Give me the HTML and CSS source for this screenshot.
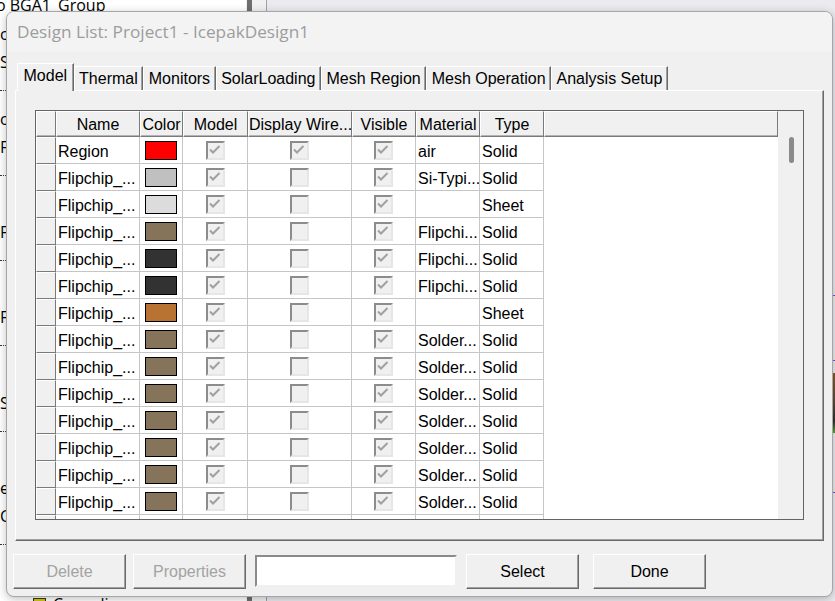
FILE: index.html
```html
<!DOCTYPE html>
<html>
<head>
<meta charset="utf-8">
<title>Design List</title>
<link rel="stylesheet" href="styles.css">
</head>
<body>
<div class="desktop">
  <div class="tree">
    <div class="tree-row first">o BGA1_Group</div>
    <div class="tree-row">c</div>
    <div class="tree-row">S</div>
    <div class="tree-row"><span class="dots"></span></div>
    <div class="tree-row">c</div>
    <div class="tree-row">F</div>
    <div class="tree-row"><span class="dots"></span></div>
    <div class="tree-row"></div>
    <div class="tree-row">F</div>
    <div class="tree-row"><span class="dots"></span></div>
    <div class="tree-row"></div>
    <div class="tree-row">F</div>
    <div class="tree-row"><span class="dots"></span></div>
    <div class="tree-row"></div>
    <div class="tree-row">S</div>
    <div class="tree-row"><span class="dots"></span></div>
    <div class="tree-row"></div>
    <div class="tree-row">e</div>
    <div class="tree-row">C</div>
    <div class="tree-row"><span class="dots"></span></div>
    <div class="tree-row"></div>
    <div class="tree-row leaf"><span class="leaf-line"></span><span class="leaf-icon"></span>Cover lines</div>
  </div>
  <div class="vscroll"><div class="vthumb"></div></div>
  <div class="view">
    <div class="view-line l1"></div>
    <div class="view-line l2"></div>
    <div class="view-obj"></div>
    <div class="view-line l3"></div>
  </div>
</div>

<div class="dialog">
  <div class="titlebar">Design List: Project1 - IcepakDesign1</div>
  <div class="body">
    <div class="tabs">
      <div class="tab active">Model</div>
      <div class="tab">Thermal</div>
      <div class="tab">Monitors</div>
      <div class="tab">SolarLoading</div>
      <div class="tab">Mesh Region</div>
      <div class="tab">Mesh Operation</div>
      <div class="tab">Analysis Setup</div>
    </div>
    <div class="panel">
      <div class="grid">
        <div class="table">
          <div class="h"></div><div class="h">Name</div><div class="h">Color</div><div class="h">Model</div><div class="h">Display Wire...</div><div class="h">Visible</div><div class="h">Material</div><div class="h">Type</div><div class="h"></div>

          <div class="c rh"></div><div class="c t">Region</div><div class="c m"><span class="sw red"></span></div><div class="c m"><span class="cb"><svg viewBox="0 0 15 15"><path d="M2 6.5 5 9.5 11.5 3"/></svg></span></div><div class="c m"><span class="cb"><svg viewBox="0 0 15 15"><path d="M2 6.5 5 9.5 11.5 3"/></svg></span></div><div class="c m"><span class="cb"><svg viewBox="0 0 15 15"><path d="M2 6.5 5 9.5 11.5 3"/></svg></span></div><div class="c t">air</div><div class="c t">Solid</div><div class="e"></div>

          <div class="c rh"></div><div class="c t">Flipchip_...</div><div class="c m"><span class="sw silver"></span></div><div class="c m"><span class="cb"><svg viewBox="0 0 15 15"><path d="M2 6.5 5 9.5 11.5 3"/></svg></span></div><div class="c m"><span class="cb"></span></div><div class="c m"><span class="cb"><svg viewBox="0 0 15 15"><path d="M2 6.5 5 9.5 11.5 3"/></svg></span></div><div class="c t">Si-Typi...</div><div class="c t">Solid</div><div class="e"></div>

          <div class="c rh"></div><div class="c t">Flipchip_...</div><div class="c m"><span class="sw light"></span></div><div class="c m"><span class="cb"><svg viewBox="0 0 15 15"><path d="M2 6.5 5 9.5 11.5 3"/></svg></span></div><div class="c m"><span class="cb"></span></div><div class="c m"><span class="cb"><svg viewBox="0 0 15 15"><path d="M2 6.5 5 9.5 11.5 3"/></svg></span></div><div class="c t"></div><div class="c t">Sheet</div><div class="e"></div>

          <div class="c rh"></div><div class="c t">Flipchip_...</div><div class="c m"><span class="sw brown"></span></div><div class="c m"><span class="cb"><svg viewBox="0 0 15 15"><path d="M2 6.5 5 9.5 11.5 3"/></svg></span></div><div class="c m"><span class="cb"></span></div><div class="c m"><span class="cb"><svg viewBox="0 0 15 15"><path d="M2 6.5 5 9.5 11.5 3"/></svg></span></div><div class="c t">Flipchi...</div><div class="c t">Solid</div><div class="e"></div>

          <div class="c rh"></div><div class="c t">Flipchip_...</div><div class="c m"><span class="sw dark"></span></div><div class="c m"><span class="cb"><svg viewBox="0 0 15 15"><path d="M2 6.5 5 9.5 11.5 3"/></svg></span></div><div class="c m"><span class="cb"></span></div><div class="c m"><span class="cb"><svg viewBox="0 0 15 15"><path d="M2 6.5 5 9.5 11.5 3"/></svg></span></div><div class="c t">Flipchi...</div><div class="c t">Solid</div><div class="e"></div>

          <div class="c rh"></div><div class="c t">Flipchip_...</div><div class="c m"><span class="sw dark"></span></div><div class="c m"><span class="cb"><svg viewBox="0 0 15 15"><path d="M2 6.5 5 9.5 11.5 3"/></svg></span></div><div class="c m"><span class="cb"></span></div><div class="c m"><span class="cb"><svg viewBox="0 0 15 15"><path d="M2 6.5 5 9.5 11.5 3"/></svg></span></div><div class="c t">Flipchi...</div><div class="c t">Solid</div><div class="e"></div>

          <div class="c rh"></div><div class="c t">Flipchip_...</div><div class="c m"><span class="sw copper"></span></div><div class="c m"><span class="cb"><svg viewBox="0 0 15 15"><path d="M2 6.5 5 9.5 11.5 3"/></svg></span></div><div class="c m"><span class="cb"></span></div><div class="c m"><span class="cb"><svg viewBox="0 0 15 15"><path d="M2 6.5 5 9.5 11.5 3"/></svg></span></div><div class="c t"></div><div class="c t">Sheet</div><div class="e"></div>

          <div class="c rh"></div><div class="c t">Flipchip_...</div><div class="c m"><span class="sw brown"></span></div><div class="c m"><span class="cb"><svg viewBox="0 0 15 15"><path d="M2 6.5 5 9.5 11.5 3"/></svg></span></div><div class="c m"><span class="cb"></span></div><div class="c m"><span class="cb"><svg viewBox="0 0 15 15"><path d="M2 6.5 5 9.5 11.5 3"/></svg></span></div><div class="c t">Solder...</div><div class="c t">Solid</div><div class="e"></div>

          <div class="c rh"></div><div class="c t">Flipchip_...</div><div class="c m"><span class="sw brown"></span></div><div class="c m"><span class="cb"><svg viewBox="0 0 15 15"><path d="M2 6.5 5 9.5 11.5 3"/></svg></span></div><div class="c m"><span class="cb"></span></div><div class="c m"><span class="cb"><svg viewBox="0 0 15 15"><path d="M2 6.5 5 9.5 11.5 3"/></svg></span></div><div class="c t">Solder...</div><div class="c t">Solid</div><div class="e"></div>

          <div class="c rh"></div><div class="c t">Flipchip_...</div><div class="c m"><span class="sw brown"></span></div><div class="c m"><span class="cb"><svg viewBox="0 0 15 15"><path d="M2 6.5 5 9.5 11.5 3"/></svg></span></div><div class="c m"><span class="cb"></span></div><div class="c m"><span class="cb"><svg viewBox="0 0 15 15"><path d="M2 6.5 5 9.5 11.5 3"/></svg></span></div><div class="c t">Solder...</div><div class="c t">Solid</div><div class="e"></div>

          <div class="c rh"></div><div class="c t">Flipchip_...</div><div class="c m"><span class="sw brown"></span></div><div class="c m"><span class="cb"><svg viewBox="0 0 15 15"><path d="M2 6.5 5 9.5 11.5 3"/></svg></span></div><div class="c m"><span class="cb"></span></div><div class="c m"><span class="cb"><svg viewBox="0 0 15 15"><path d="M2 6.5 5 9.5 11.5 3"/></svg></span></div><div class="c t">Solder...</div><div class="c t">Solid</div><div class="e"></div>

          <div class="c rh"></div><div class="c t">Flipchip_...</div><div class="c m"><span class="sw brown"></span></div><div class="c m"><span class="cb"><svg viewBox="0 0 15 15"><path d="M2 6.5 5 9.5 11.5 3"/></svg></span></div><div class="c m"><span class="cb"></span></div><div class="c m"><span class="cb"><svg viewBox="0 0 15 15"><path d="M2 6.5 5 9.5 11.5 3"/></svg></span></div><div class="c t">Solder...</div><div class="c t">Solid</div><div class="e"></div>

          <div class="c rh"></div><div class="c t">Flipchip_...</div><div class="c m"><span class="sw brown"></span></div><div class="c m"><span class="cb"><svg viewBox="0 0 15 15"><path d="M2 6.5 5 9.5 11.5 3"/></svg></span></div><div class="c m"><span class="cb"></span></div><div class="c m"><span class="cb"><svg viewBox="0 0 15 15"><path d="M2 6.5 5 9.5 11.5 3"/></svg></span></div><div class="c t">Solder...</div><div class="c t">Solid</div><div class="e"></div>

          <div class="c rh"></div><div class="c t">Flipchip_...</div><div class="c m"><span class="sw brown"></span></div><div class="c m"><span class="cb"><svg viewBox="0 0 15 15"><path d="M2 6.5 5 9.5 11.5 3"/></svg></span></div><div class="c m"><span class="cb"></span></div><div class="c m"><span class="cb"><svg viewBox="0 0 15 15"><path d="M2 6.5 5 9.5 11.5 3"/></svg></span></div><div class="c t">Solder...</div><div class="c t">Solid</div><div class="e"></div>

          <div class="c rh"></div><div class="c t">Flipchip_...</div><div class="c m"><span class="sw brown"></span></div><div class="c m"><span class="cb"><svg viewBox="0 0 15 15"><path d="M2 6.5 5 9.5 11.5 3"/></svg></span></div><div class="c m"><span class="cb"></span></div><div class="c m"><span class="cb"><svg viewBox="0 0 15 15"><path d="M2 6.5 5 9.5 11.5 3"/></svg></span></div><div class="c t">Solder...</div><div class="c t">Solid</div><div class="e"></div>
        </div>
        <div class="scroll"><div class="thumb"></div></div>
      </div>
    </div>
    <div class="footer">
      <button class="btn" disabled>Delete</button>
      <button class="btn" disabled>Properties</button>
      <input class="field" type="text" value="">
      <button class="btn">Select</button>
      <button class="btn done">Done</button>
    </div>
  </div>
</div>
</body>
</html>
```

FILE: styles.css
```css
html, body {
  margin: 0;
  padding: 0;
}
body {
  width: 835px;
  height: 601px;
  overflow: hidden;
  position: relative;
  background: #ececf0;
  font-family: "Liberation Sans", Arial, sans-serif;
}

/* background application */
.desktop {
  display: flex;
  height: 601px;
}
.tree {
  width: 246px;
  background: #ffffff;
  font-family: "Open Sans", "Noto Sans", sans-serif;
  font-size: 16px;
  color: #000;
  overflow: hidden;
}
.tree-row {
  height: 28.4px;
  line-height: 28px;
  white-space: nowrap;
  display: flex;
  align-items: center;
}
.tree-row.first {
  margin-top: -9px;
  margin-left: -4px;
}
.dots {
  width: 4px;
  height: 0;
  border-top: 1px dotted #333;
  margin-right: 1px;
  box-shadow: 5px 0 0 #8b3a2a;
}
.leaf {
  padding-left: 12px;
  margin-top: 3px;
}
.leaf-line {
  width: 18px;
  border-top: 1px dotted #333;
  margin-right: 3px;
}
.leaf-icon {
  width: 11px;
  height: 11px;
  background: #d8c800;
  border: 1px solid #333;
  margin-right: 7px;
}
.vscroll {
  width: 20px;
  background: #f0f0f0;
  border-right: 1px solid #a0a0a0;
  display: flex;
}
.vthumb {
  width: 5px;
  margin-left: 1px;
  background: #6e6e6e;
}
.view {
  flex: 1;
  background: #ebebef;
  position: relative;
}
.view-line {
  position: absolute;
  right: 0;
  width: 3px;
  height: 1px;
  background: #7b55c8;
}
.view-line.l1 { top: 295px; }
.view-line.l2 { top: 360px; }
.view-line.l3 { top: 492px; }
.view-obj {
  position: absolute;
  right: 0;
  top: 373px;
  width: 3px;
  height: 60px;
  background: linear-gradient(#8a5a2a, #5a4a3a 50%, #303030 80%, #5aa83a);
}

/* dialog */
.dialog {
  position: absolute;
  left: 6px;
  top: 11px;
  width: 827px;
  height: 586px;
  box-sizing: border-box;
  border: 1px solid #a6a6a6;
  border-radius: 8px;
  background: #f0f0f0;
  box-shadow: 0 2px 8px rgba(0, 0, 0, 0.25);
  overflow: hidden;
  font-family: "Liberation Sans", Arial, sans-serif;
  font-size: 16px;
  color: #000;
}
.titlebar {
  height: 40px;
  background: #f3f3f3;
  padding: 0 0 1px 10px;
  box-sizing: border-box;
  display: flex;
  align-items: center;
  font-family: "Open Sans", "Noto Sans", sans-serif;
  font-size: 17.2px;
  color: #9d9d9d;
}
.body {
  padding: 11px 8px 0 8px;
}

/* tabs */
.tabs {
  display: flex;
  align-items: flex-end;
  height: 28px;
  margin-left: 2px;
  margin-bottom: -1px;
  position: relative;
  z-index: 1;
}
.tab {
  height: 24px;
  box-sizing: border-box;
  margin-bottom: 1px;
  padding: 1px 4.5px 0 4.5px;
  border-top: 1px solid #ffffff;
  border-left: 1px solid #ffffff;
  border-right: 1px solid #696969;
  box-shadow: inset -1px 0 0 #a0a0a0;
  background: #f0f0f0;
  line-height: 22px;
  white-space: nowrap;
}
.tab.active {
  height: 28px;
  margin-bottom: 0;
  padding: 0 5.5px 2px 5.5px;
  line-height: 24px;
}

/* tab panel */
.panel {
  height: 451px;
  box-sizing: border-box;
  border-top: 1px solid #ffffff;
  border-left: 1px solid #ffffff;
  border-right: 1px solid #696969;
  border-bottom: 1px solid #696969;
  box-shadow: inset -1px -1px 0 #a0a0a0;
  padding: 19px 19px 20px 19px;
}

/* grid */
.grid {
  width: 769px;
  height: 410px;
  box-sizing: border-box;
  border: 1px solid #646464;
  display: flex;
  background: #ffffff;
}
.table {
  flex: 1;
  overflow: hidden;
  display: grid;
  grid-template-columns: 20px 84px 43px 65px 104px 64px 64px 64px 1fr;
  grid-template-rows: 26px;
  grid-auto-rows: 27px;
  align-content: start;
}
.h {
  box-sizing: border-box;
  background: #f0f0f0;
  border-top: 1px solid #ffffff;
  border-left: 1px solid #ffffff;
  border-right: 1px solid #7a7a7a;
  border-bottom: 1px solid #7a7a7a;
  box-shadow: inset 0 -1px 0 #b4b4b4;
  text-align: center;
  padding-top: 1px;
  line-height: 24px;
  white-space: nowrap;
  overflow: hidden;
}
.c {
  box-sizing: border-box;
  border-right: 1px solid #c6c6c6;
  border-bottom: 1px solid #c6c6c6;
  background: #ffffff;
  white-space: nowrap;
  overflow: hidden;
}
.c.t {
  padding: 2px 0 0 2px;
  line-height: 25px;
}
.c.m {
  display: flex;
  align-items: center;
  justify-content: center;
}
.c.rh {
  background: #f0f0f0;
  border-top: 1px solid #ffffff;
  border-left: 1px solid #ffffff;
  border-right: 1px solid #7a7a7a;
  border-bottom: 1px solid #7a7a7a;
}
.e {
  background: #ffffff;
}

.sw {
  width: 32px;
  height: 19px;
  box-sizing: border-box;
  border: 1px solid #000;
}
.sw.red { background: #ff0000; }
.sw.silver { background: #c0c0c0; }
.sw.light { background: #dcdcdc; }
.sw.brown { background: #857459; }
.sw.dark { background: #323232; }
.sw.copper { background: #b87333; }

.cb {
  width: 19px;
  height: 19px;
  box-sizing: border-box;
  border: 2px solid;
  border-color: #8c8c8c #e6e6e6 #e6e6e6 #8c8c8c;
  background: #f0f0f0;
  display: flex;
}
.cb svg {
  width: 15px;
  height: 15px;
  fill: none;
  stroke: #a0a0a0;
  stroke-width: 2;
}

.scroll {
  width: 25px;
  background: #f0f0f0;
  padding: 26px 0 0 11px;
  box-sizing: border-box;
}
.thumb {
  width: 5px;
  height: 26px;
  border-radius: 3px;
  background: #8a8a8a;
}

/* footer buttons */
.footer {
  display: flex;
  gap: 7px;
  padding: 13px 0 0 0;
  margin-left: -2px;
}
.btn {
  width: 113px;
  height: 35px;
  box-sizing: border-box;
  margin: 0;
  padding: 0;
  font-family: "Liberation Sans", Arial, sans-serif;
  font-size: 16px;
  color: #000;
  background: #f0f0f0;
  border-top: 1px solid #ffffff;
  border-left: 1px solid #ffffff;
  border-right: 1px solid #696969;
  border-bottom: 1px solid #696969;
  box-shadow: inset -1px -1px 0 #a0a0a0;
  border-radius: 0;
}
.btn:disabled {
  color: #a3a3a3;
}
.btn.done {
  margin-left: 7px;
}
.field {
  width: 202px;
  height: 32px;
  margin: 1px 2px 0 2px;
  box-sizing: border-box;
  padding: 0 3px;
  background: #ffffff;
  border: 2px solid;
  border-color: #8a8a8a #f0f0f0 #f0f0f0 #8a8a8a;
  font-family: "Liberation Sans", Arial, sans-serif;
  font-size: 16px;
  outline: none;
}
```
